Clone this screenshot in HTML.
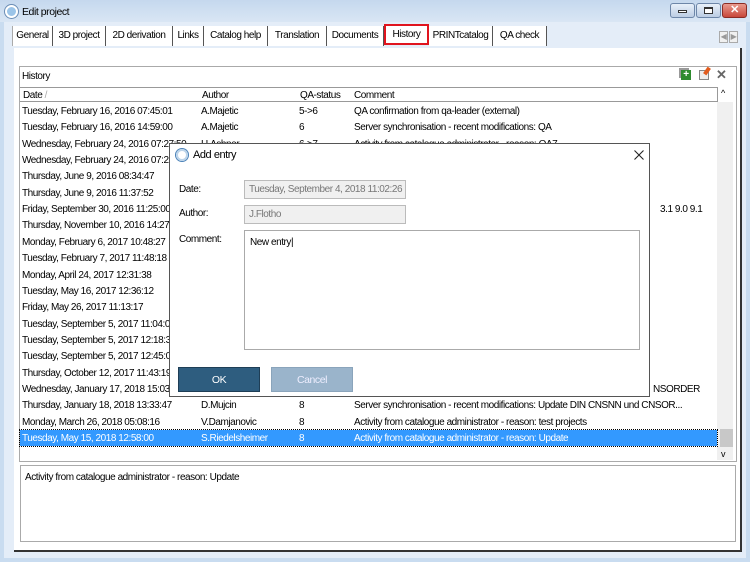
<!DOCTYPE html>
<html><head><meta charset="utf-8"><style>
*{box-sizing:border-box;margin:0;padding:0}
body{width:750px;height:562px;overflow:hidden;position:relative;background:#c9dcf0;font-family:"Liberation Sans",sans-serif;font-size:10px;letter-spacing:-0.45px;color:#000;white-space:nowrap}
.abs{position:absolute}
.title{left:0;top:0;width:750px;height:22px;background:linear-gradient(#c5d8ee,#d9e6f4)}
.frame{left:4px;top:22px;width:742px;height:536px;background:#e4edf8}
.tab{position:absolute;top:26px;height:20px;background:#fff;border-right:1px solid #555;line-height:20px;text-align:center;font-size:10px}
.panel{left:14px;top:48px;width:728px;height:504px;background:#fff;border-right:2px solid #333;border-bottom:2px solid #333}
.grp{left:19px;top:66px;width:718px;height:396px;border:1px solid #aaa;background:#fff}
.hdr{position:absolute;top:87px;height:15px;border:1px solid #999;border-left:none;background:#fff;line-height:15px;padding-left:3px}
.row{position:absolute;left:20px;width:697px;height:16.35px;line-height:18px}
.row span{position:absolute;white-space:nowrap}
.sel{background:#3399ff;color:#fff}
.dlg{left:169px;top:143px;width:481px;height:254px;background:#fff;border:1px solid #555}
.fld{position:absolute;background:#f0f0f0;border:1px solid #bbb;color:#777;padding-left:4px;line-height:17px}
.btn{position:absolute;top:367px;height:25px;width:82px;text-align:center;line-height:24px;font-size:10.5px}
</style></head><body>
<div class="abs title"></div>
<div class="abs" style="left:5px;top:5px;width:13px;height:13px;border-radius:50%;border:2px solid #fff;background:#9bc4e8;box-shadow:0 0 0 1px #6a8db5"></div>
<div class="abs" style="left:22px;top:6px;font-size:10.5px">Edit project</div>
<div class="abs" style="left:670px;top:3px;width:25px;height:15px;border:1px solid #6d86a8;border-radius:3px;background:linear-gradient(#e8f0fa,#bccde3)"><div style="margin:6px auto 0;width:9px;height:3px;border:1px solid #333;background:#fff"></div></div>
<div class="abs" style="left:696px;top:3px;width:25px;height:15px;border:1px solid #6d86a8;border-radius:3px;background:linear-gradient(#e8f0fa,#bccde3)"><div style="margin:3px auto 0;width:9px;height:7px;border:1px solid #333;border-top-width:2px;background:#fff"></div></div>
<div class="abs" style="left:722px;top:3px;width:25px;height:15px;border:1px solid #8a2c25;border-radius:3px;background:linear-gradient(#e99a8e,#c8473a);color:#fff;text-align:center;font-weight:bold;line-height:13px;font-size:11px">✕</div>
<div class="abs frame"></div>
<div class="tab" style="left:12px;width:41px;border-left:1px solid #aaa">General</div>
<div class="tab" style="left:53px;width:53px">3D project</div>
<div class="tab" style="left:106px;width:67px">2D derivation</div>
<div class="tab" style="left:173px;width:31px">Links</div>
<div class="tab" style="left:204px;width:64px">Catalog help</div>
<div class="tab" style="left:268px;width:59px">Translation</div>
<div class="tab" style="left:327px;width:57px">Documents</div>
<div class="tab" style="left:384px;width:45px;border:2px solid #e0141e;line-height:18px;top:24px;height:21px">History</div>
<div class="tab" style="left:429px;width:64px">PRINTcatalog</div>
<div class="tab" style="left:493px;width:54px">QA check</div>
<div class="abs" style="left:719px;top:31px;width:9px;height:12px;border:1px solid #aaa;background:#f0f0f0;color:#999;font-size:8px;line-height:10px;text-align:center">◀</div>
<div class="abs" style="left:729px;top:31px;width:9px;height:12px;border:1px solid #aaa;background:#f0f0f0;color:#999;font-size:8px;line-height:10px;text-align:center">▶</div>
<div class="abs panel"></div>
<div class="abs grp"></div>
<div class="abs" style="left:22px;top:71px">History</div>
<div class="abs" style="left:681px;top:70px;width:10px;height:10px;background:#2e8b2e;color:#fff;font-size:10px;line-height:10px;text-align:center;font-weight:bold;box-shadow:-2px -2px 0 #999">+</div>
<div class="abs" style="left:699px;top:70px;width:10px;height:10px;border:1px solid #888;background:#eee"></div>
<div class="abs" style="left:705px;top:67px;width:4px;height:8px;background:#e25c1e;transform:rotate(35deg)"></div>
<div class="abs" style="left:716px;top:67px;color:#666;font-size:13px;font-weight:bold">✕</div>
<div class="hdr" style="left:20px;width:180px">Date <span style="color:#aaa">/</span></div>
<div class="hdr" style="left:199px;width:99px">Author</div>
<div class="hdr" style="left:297px;width:55px">QA-status</div>
<div class="hdr" style="left:351px;width:367px">Comment</div>
<div class="abs" style="left:717px;top:102px;width:16px;height:358px;background:#f0f0f0"></div>
<div class="abs" style="left:721px;top:88px;font-size:9px">^</div>
<div class="abs" style="left:720px;top:429px;width:13px;height:18px;background:#c8c8c8"></div>
<div class="abs" style="left:721px;top:449px;font-size:9px">v</div>
<div class="row" style="top:103px"><span style="left:2px">Tuesday, February 16, 2016 07:45:01</span><span style="left:181px">A.Majetic</span><span style="left:279px">5-&gt;6</span><span style="left:334px">QA confirmation from qa-leader (external)</span></div>
<div class="row" style="top:119.35px"><span style="left:2px">Tuesday, February 16, 2016 14:59:00</span><span style="left:181px">A.Majetic</span><span style="left:279px">6</span><span style="left:334px">Server synchronisation - recent modifications: QA</span></div>
<div class="row" style="top:135.7px"><span style="left:2px">Wednesday, February 24, 2016 07:27:50</span><span style="left:181px">H.Ashner</span><span style="left:279px">6-&gt;7</span><span style="left:334px">Activity from catalogue administrator - reason: QA7</span></div>
<div class="row" style="top:152px"><span style="left:2px">Wednesday, February 24, 2016 07:28:</span></div>
<div class="row" style="top:168.4px"><span style="left:2px">Thursday, June 9, 2016 08:34:47</span></div>
<div class="row" style="top:184.75px"><span style="left:2px">Thursday, June 9, 2016 11:37:52</span></div>
<div class="row" style="top:201.1px"><span style="left:2px">Friday, September 30, 2016 11:25:00</span><span style="left:640px">3.1 9.0 9.1</span></div>
<div class="row" style="top:217.45px"><span style="left:2px">Thursday, November 10, 2016 14:27:</span></div>
<div class="row" style="top:233.8px"><span style="left:2px">Monday, February 6, 2017 10:48:27</span></div>
<div class="row" style="top:250.15px"><span style="left:2px">Tuesday, February 7, 2017 11:48:18</span></div>
<div class="row" style="top:266.5px"><span style="left:2px">Monday, April 24, 2017 12:31:38</span></div>
<div class="row" style="top:282.85px"><span style="left:2px">Tuesday, May 16, 2017 12:36:12</span></div>
<div class="row" style="top:299.2px"><span style="left:2px">Friday, May 26, 2017 11:13:17</span></div>
<div class="row" style="top:315.55px"><span style="left:2px">Tuesday, September 5, 2017 11:04:03</span></div>
<div class="row" style="top:331.9px"><span style="left:2px">Tuesday, September 5, 2017 12:18:37</span></div>
<div class="row" style="top:348.25px"><span style="left:2px">Tuesday, September 5, 2017 12:45:03</span></div>
<div class="row" style="top:364.6px"><span style="left:2px">Thursday, October 12, 2017 11:43:19</span></div>
<div class="row" style="top:380.95px"><span style="left:2px">Wednesday, January 17, 2018 15:03:4</span><span style="left:633px">NSORDER</span></div>
<div class="row" style="top:397.3px"><span style="left:2px">Thursday, January 18, 2018 13:33:47</span><span style="left:181px">D.Mujcin</span><span style="left:279px">8</span><span style="left:334px">Server synchronisation - recent modifications: Update DIN CNSNN und CNSOR...</span></div>
<div class="row" style="top:413.65px"><span style="left:2px">Monday, March 26, 2018 05:08:16</span><span style="left:181px">V.Damjanovic</span><span style="left:279px">8</span><span style="left:334px">Activity from catalogue administrator - reason: test projects</span></div>
<div class="row sel" style="top:430px;outline:1px dotted #000"><span style="left:2px">Tuesday, May 15, 2018 12:58:00</span><span style="left:181px">S.Riedelsheimer</span><span style="left:279px">8</span><span style="left:334px">Activity from catalogue administrator - reason: Update</span></div>
<div class="abs" style="left:20px;top:465px;width:716px;height:77px;border:1px solid #aaa;background:#fff"></div>
<div class="abs" style="left:25px;top:472px">Activity from catalogue administrator - reason: Update</div>
<div class="abs dlg"></div>
<div class="abs" style="left:176px;top:149px;width:12px;height:12px;border-radius:50%;border:2px solid #bcd4ea;box-shadow:0 0 0 1px #4b82b8"></div>
<div class="abs" style="left:193px;top:149px;font-size:11px">Add entry</div>
<svg class="abs" style="left:634px;top:150px" width="10" height="10"><path d="M0.5 0.5L9.5 9.5M9.5 0.5L0.5 9.5" stroke="#222" stroke-width="1.1"/></svg>
<div class="abs" style="left:179px;top:184px">Date:</div>
<div class="abs" style="left:179px;top:208px">Author:</div>
<div class="abs" style="left:179px;top:234px">Comment:</div>
<div class="fld" style="left:244px;top:180px;width:162px;height:19px">Tuesday, September 4, 2018 11:02:26</div>
<div class="fld" style="left:244px;top:205px;width:162px;height:19px">J.Flotho</div>
<div class="abs" style="left:244px;top:230px;width:396px;height:120px;border:1px solid #aaa;padding:6px 5px">New entry|</div>
<div class="btn" style="left:178px;background:#2e5d7f;color:#fff;border:1px solid #1e3e56">OK</div>
<div class="btn" style="left:271px;background:#9ab4cb;color:#eef;border:1px solid #8aa4bb">Cancel</div>
</body></html>
